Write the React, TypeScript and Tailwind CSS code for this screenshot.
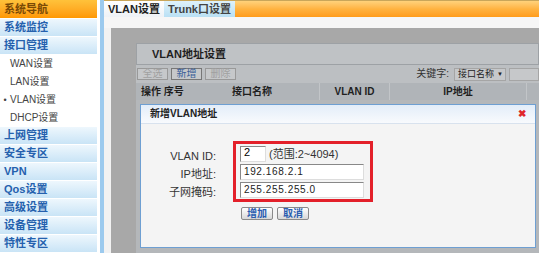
import React from 'react';

const F = { fontFamily: '"Liberation Sans","Noto Sans CJK SC",sans-serif' };

const SideItem: React.FC<{ label: string }> = ({ label }) => (
  <div className="h-[18px] flex items-center pl-[4px] border-b border-white bg-gradient-to-b from-[#eef7fd] to-[#c9e4f6] text-[11px] font-bold text-[#2561ae] leading-none">
    {label}
  </div>
);

const SubItem: React.FC<{ label: string; active?: boolean }> = ({ label, active }) => (
  <div className="h-[18px] flex items-center bg-white text-[10px] text-[#444] leading-none">
    <span className="w-[10px] text-center text-[9px]">{active ? '•' : ''}</span>
    {label}
  </div>
);

const DlgButton: React.FC<{ label: string }> = ({ label }) => (
  <button className="w-[32px] h-[13px] border border-[#8a8a8a] rounded-[2px] bg-gradient-to-b from-white to-[#d8d8d8] text-[10px] leading-none text-[#2a5db0] font-bold">
    {label}
  </button>
);

const App: React.FC = () => {
  return (
    <div className="w-[539px] h-[253px] flex overflow-hidden bg-white" style={F}>
      {/* 左侧导航 */}
      <div className="w-[97px] flex flex-col">
        <div className="h-[19px] flex items-center pl-[4px] border-b border-white bg-gradient-to-b from-[#ffc23a] to-[#ff9800] text-[11px] font-bold text-[#7a4a05] leading-none">
          系统导航
        </div>
        <SideItem label="系统监控" />
        <SideItem label="接口管理" />
        <SubItem label="WAN设置" />
        <SubItem label="LAN设置" />
        <SubItem label="VLAN设置" active />
        <SubItem label="DHCP设置" />
        <SideItem label="上网管理" />
        <SideItem label="安全专区" />
        <SideItem label="VPN" />
        <SideItem label="Qos设置" />
        <SideItem label="高级设置" />
        <SideItem label="设备管理" />
        <SideItem label="特性专区" />
      </div>
      <div className="w-[3px] bg-white" />
      <div className="w-[4px] bg-[#9ccaee]" />

      {/* 主区域 */}
      <div className="flex-1 flex flex-col">
        <div className="h-[17px] flex border-t border-[#c9a65a]">
          <div className="w-[60px] flex items-center justify-center bg-gradient-to-b from-white to-[#eef2f6] text-[11px] font-bold text-[#222] leading-none">
            VLAN设置
          </div>
          <div className="w-[71px] flex items-center justify-center bg-gradient-to-b from-[#dff2fb] to-[#b9e0f4] text-[11px] font-bold text-[#444] leading-none">
            Trunk口设置
          </div>
          <div className="flex-1 bg-gradient-to-b from-[#ffd27a] via-[#ffb340] to-[#ff9c1a]" />
        </div>
        <div className="h-[11px] bg-[#f6f6f6]" />
        <div className="flex-1 flex bg-[#f2f2f2] pl-[7px]">
          <div className="relative flex-1 bg-[#a8a8a8] pl-[25px] pt-[15px]">
            {/* 背后的面板 */}
            <div className="bg-[#b4b7ba] h-full flex flex-col">
              <div className="h-[22px] flex items-center pl-[15px] border border-[#9da1a5] bg-[#bfc2c5] text-[11px] font-bold text-[#1f1f1f] leading-none">
                VLAN地址设置
              </div>
              <div className="h-[18px] flex items-center gap-[3px] pl-[1px] bg-[#bcbfc2]">
                <span className="w-[31px] h-[12px] border border-[#999] bg-[#c6c8ca] text-[10px] leading-[10px] text-center text-[#a0a0a0]">全选</span>
                <span className="w-[31px] h-[12px] border border-[#777] bg-[#c6c8ca] text-[10px] leading-[10px] text-center text-[#3a5f99]">新增</span>
                <span className="w-[31px] h-[12px] border border-[#999] bg-[#c6c8ca] text-[10px] leading-[10px] text-center text-[#a0a0a0]">删除</span>
                <div className="flex-1" />
                <span className="text-[10px] text-[#333] leading-none mr-[2px]">关键字:</span>
                <span className="w-[52px] h-[13px] flex items-center justify-between pl-[3px] pr-[2px] bg-[#c6c8ca] border border-[#a5a5a5] text-[9px] text-[#222] leading-none whitespace-nowrap">
                  接口名称<span className="text-[6px]">▼</span>
                </span>
                <span className="w-[30px] h-[13px] bg-[#c6c8ca] border border-[#a5a5a5]" />
              </div>
              <div className="h-[17px] flex items-center bg-[#b0b4b8] text-[10px] font-bold text-[#1f1f1f] leading-none">
                <span className="w-[96px] pl-[5px]">操作 序号</span>
                <span className="w-[88px] h-full flex items-center border-r border-[#c2c5c8]">接口名称</span>
                <span className="w-[70px] h-full flex items-center justify-center border-r border-[#c2c5c8]">VLAN ID</span>
                <span className="w-[137px] h-full flex items-center justify-center border-r border-[#c2c5c8]">IP地址</span>
              </div>
            </div>

            {/* 新增VLAN地址 对话框 */}
            <div className="absolute left-[29px] top-[76px] w-[396px] h-[144px] border border-[#6e9fd2] bg-[#f4f4f4] flex flex-col">
              <div className="h-[19px] flex items-center justify-between px-[9px] bg-gradient-to-b from-[#e3edf9] to-[#f8fafd] border-b border-[#d8e2ee]">
                <span className="text-[10px] font-bold text-[#222] leading-none">新增VLAN地址</span>
                <span className="text-[10px] font-bold text-[#e0262a] leading-none">✖</span>
              </div>
              <div className="flex pt-[17px]">
                <div className="w-[75px] flex flex-col items-end pt-[8px] gap-[4px] text-[11px] text-[#333] leading-none">
                  <span className="h-[14px] flex items-center">VLAN ID:</span>
                  <span className="h-[14px] flex items-center">IP地址:</span>
                  <span className="h-[14px] flex items-center">子网掩码:</span>
                </div>
                <div className="ml-[17px] flex flex-col">
                  <div className="w-[140px] h-[61px] border-[3px] border-[#e3202a] flex flex-col gap-[2px] pl-[4px] pt-[2px]">
                    <div className="flex items-center gap-[3px]">
                      <span className="w-[26px] h-[16px] bg-white border border-t-[#888] border-l-[#888] border-r-[#ddd] border-b-[#ddd] text-[11px] leading-none pl-[3px]">2</span>
                      <span className="text-[11px] text-[#333] leading-none">(范围:2~4094)</span>
                    </div>
                    <span className="w-[124px] h-[16px] flex items-center bg-white border border-t-[#888] border-l-[#888] border-r-[#ddd] border-b-[#ddd] text-[10px] tracking-[0.6px] text-[#222] leading-none pl-[3px]">192.168.2.1</span>
                    <span className="w-[124px] h-[16px] flex items-center bg-white border border-t-[#888] border-l-[#888] border-r-[#ddd] border-b-[#ddd] text-[10px] tracking-[0.6px] text-[#222] leading-none pl-[3px]">255.255.255.0</span>
                  </div>
                  <div className="flex gap-[4px] pl-[8px] pt-[5px]">
                    <DlgButton label="增加" />
                    <DlgButton label="取消" />
                  </div>
                </div>
              </div>
            </div>
          </div>
        </div>
      </div>
    </div>
  );
};

export default App;
